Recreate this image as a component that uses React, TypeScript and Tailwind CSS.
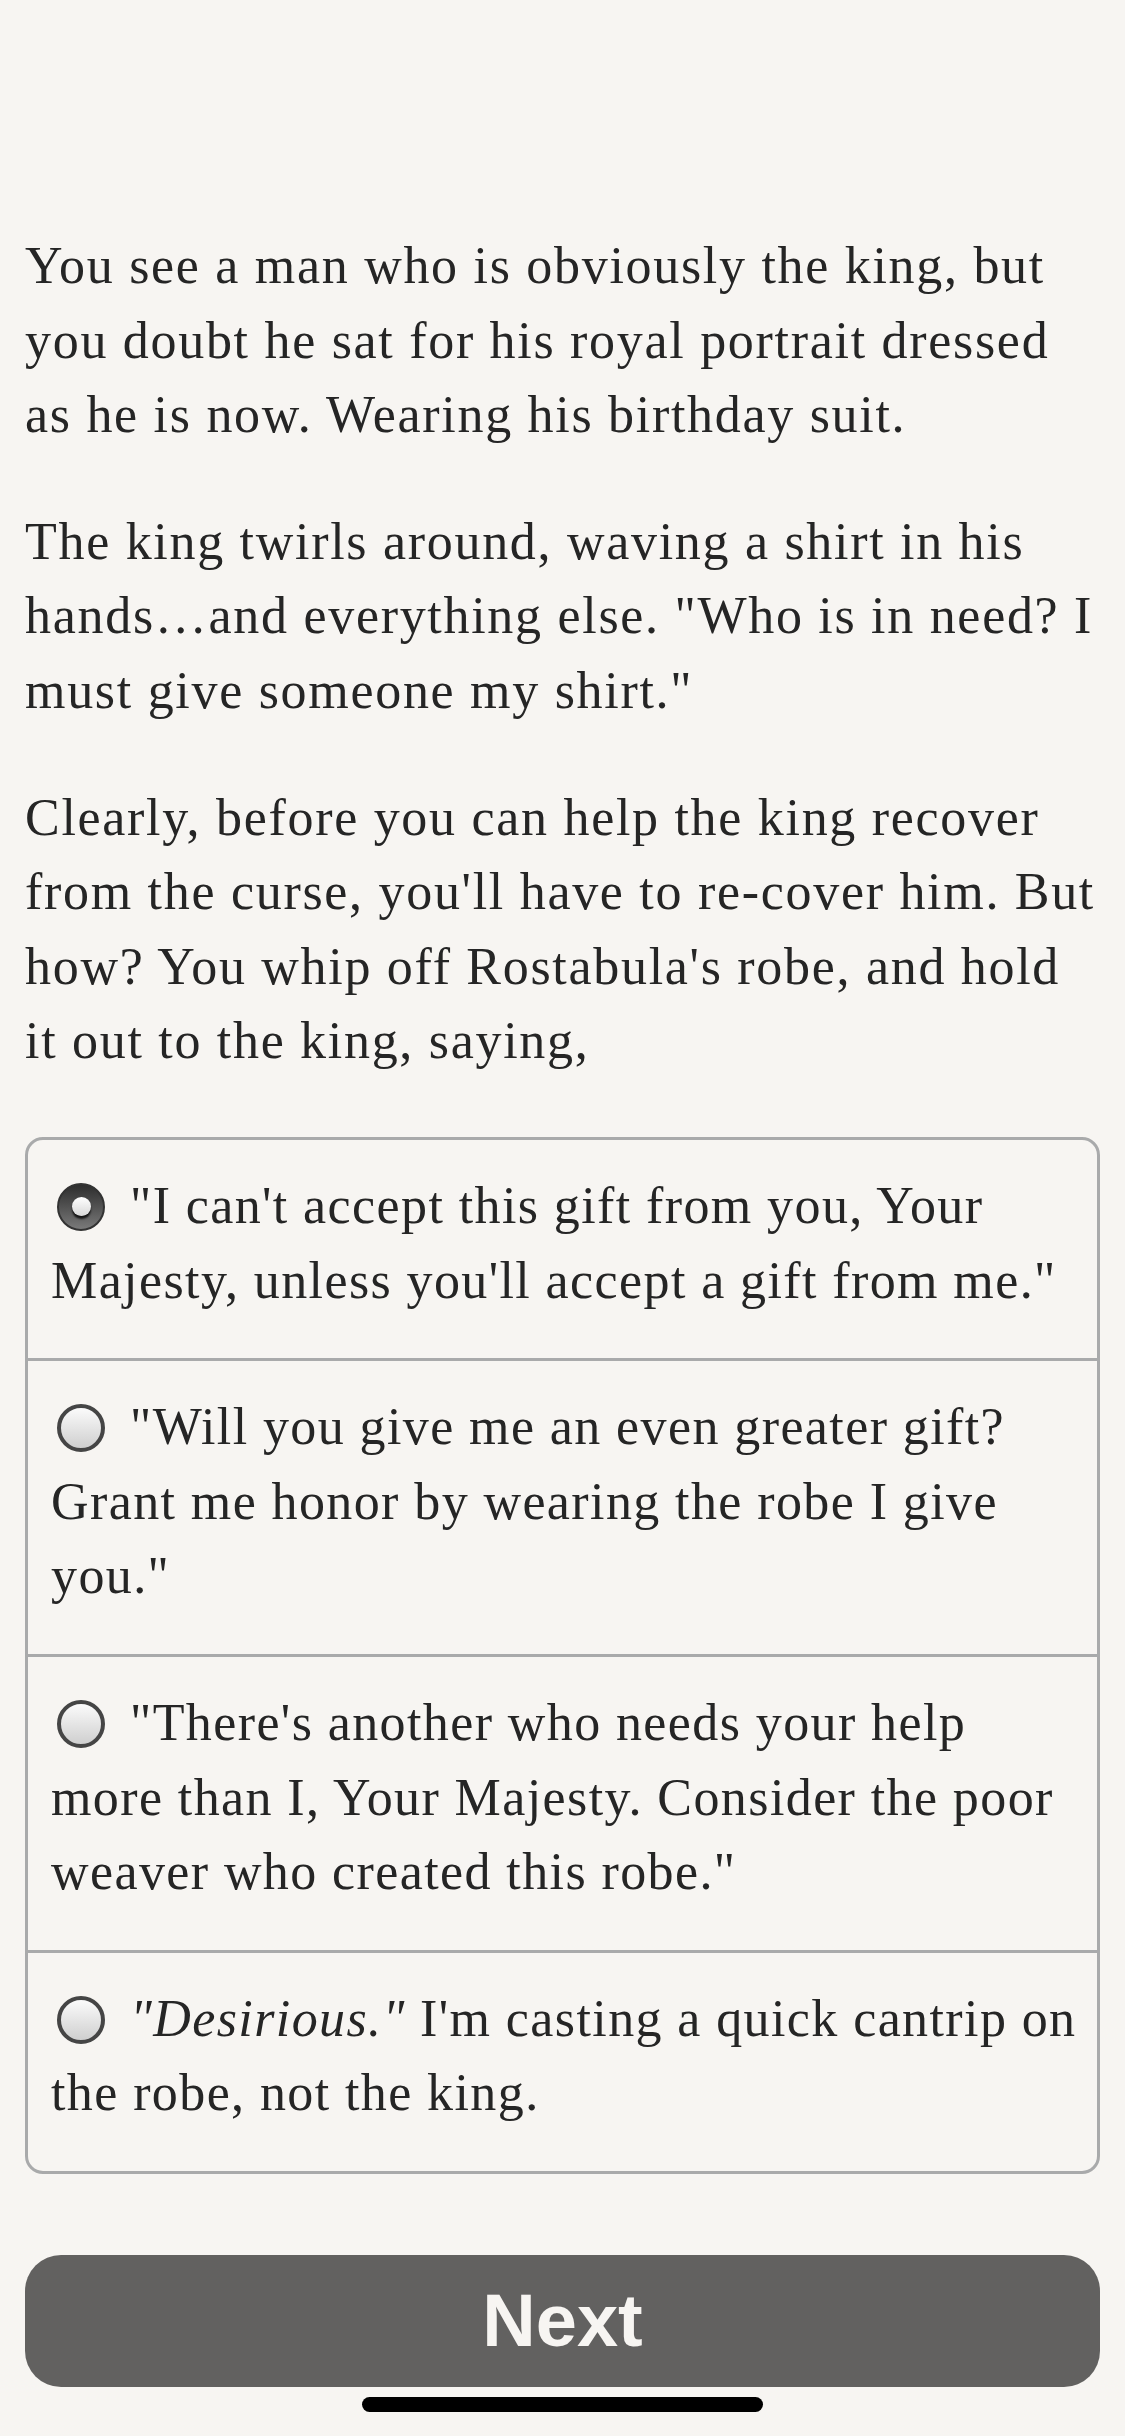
import React from "react";

const serif = { fontFamily: '"Liberation Serif", "Times New Roman", serif' };

function Radio({ checked }: { checked: boolean }) {
  if (checked) {
    return (
      <span className="inline-block align-[-8px] w-[48px] h-[48px] rounded-full bg-gradient-to-b from-[#2e2e2e] to-[#7a7a7a] border-[2px] border-[#333] mr-[25px] ml-[6px]">
        <span className="block mx-auto mt-[12px] w-[19px] h-[19px] rounded-full bg-gradient-to-b from-[#ffffff] to-[#d8d8d8] shadow-[0_3px_2px_rgba(0,0,0,0.8)]" />
      </span>
    );
  }
  return (
    <span className="inline-block align-[-8px] w-[48px] h-[48px] rounded-full bg-gradient-to-b from-[#fbfbfb] to-[#cfcfcf] border-[4px] border-[#454545] mr-[25px] ml-[6px]" />
  );
}

const options: { checked: boolean; content: React.ReactNode }[] = [
  {
    checked: true,
    content: <>"I can't accept this gift from you, Your Majesty, unless you'll accept a gift from me."</>,
  },
  {
    checked: false,
    content: <>"Will you give me an even greater gift? Grant me honor by wearing the robe I give you."</>,
  },
  {
    checked: false,
    content: <>"There's another who needs your help more than I, Your Majesty. Consider the poor weaver who created this robe."</>,
  },
  {
    checked: false,
    content: (
      <>
        <em>"Desirious."</em> I'm casting a quick cantrip on the robe, not the king.
      </>
    ),
  },
];

export default function App() {
  return (
    <div className="relative min-h-[2436px] w-full bg-[#f7f5f2] text-[#252525]" style={serif}>
      <div className="px-[25px] pt-[229px] text-[52px] leading-[74.6px] tracking-[1.7px]">
        <p className="mb-[52px]">
          You see a man who is obviously the king, but you doubt he sat for his royal portrait dressed as he is now. Wearing his birthday suit.
        </p>
        <p className="mb-[52px]">
          The king twirls around, waving a shirt in his hands…and everything else. "Who is in need? I must give someone my shirt."
        </p>
        <p className="mb-[58px]">
          Clearly, before you can help the king recover from the curse, you'll have to re-cover him. But how? You whip off Rostabula's robe, and hold it out to the king, saying,
        </p>
        <div className="rounded-[18px] border-[3px] border-[#a9aaab] overflow-hidden tracking-[1.4px]">
          {options.map((o, i) => (
            <div
              key={i}
              className={`pl-[23px] pr-[6px] pt-[29px] pb-[40px] ${i > 0 ? "border-t-[3px] border-[#a9aaab]" : ""}`}
            >
              <Radio checked={o.checked} />
              {o.content}
            </div>
          ))}
        </div>
        <button
          className="mt-[81px] w-full h-[132px] rounded-[36px] bg-[#626160] text-[#f7f5f2] text-[74px] font-bold tracking-normal flex items-center justify-center"
          style={{ fontFamily: '"Liberation Sans", Arial, sans-serif' }}
        >
          Next
        </button>
      </div>
      <div className="absolute left-[362px] top-[2397px] w-[401px] h-[15px] rounded-full bg-black" />
    </div>
  );
}
